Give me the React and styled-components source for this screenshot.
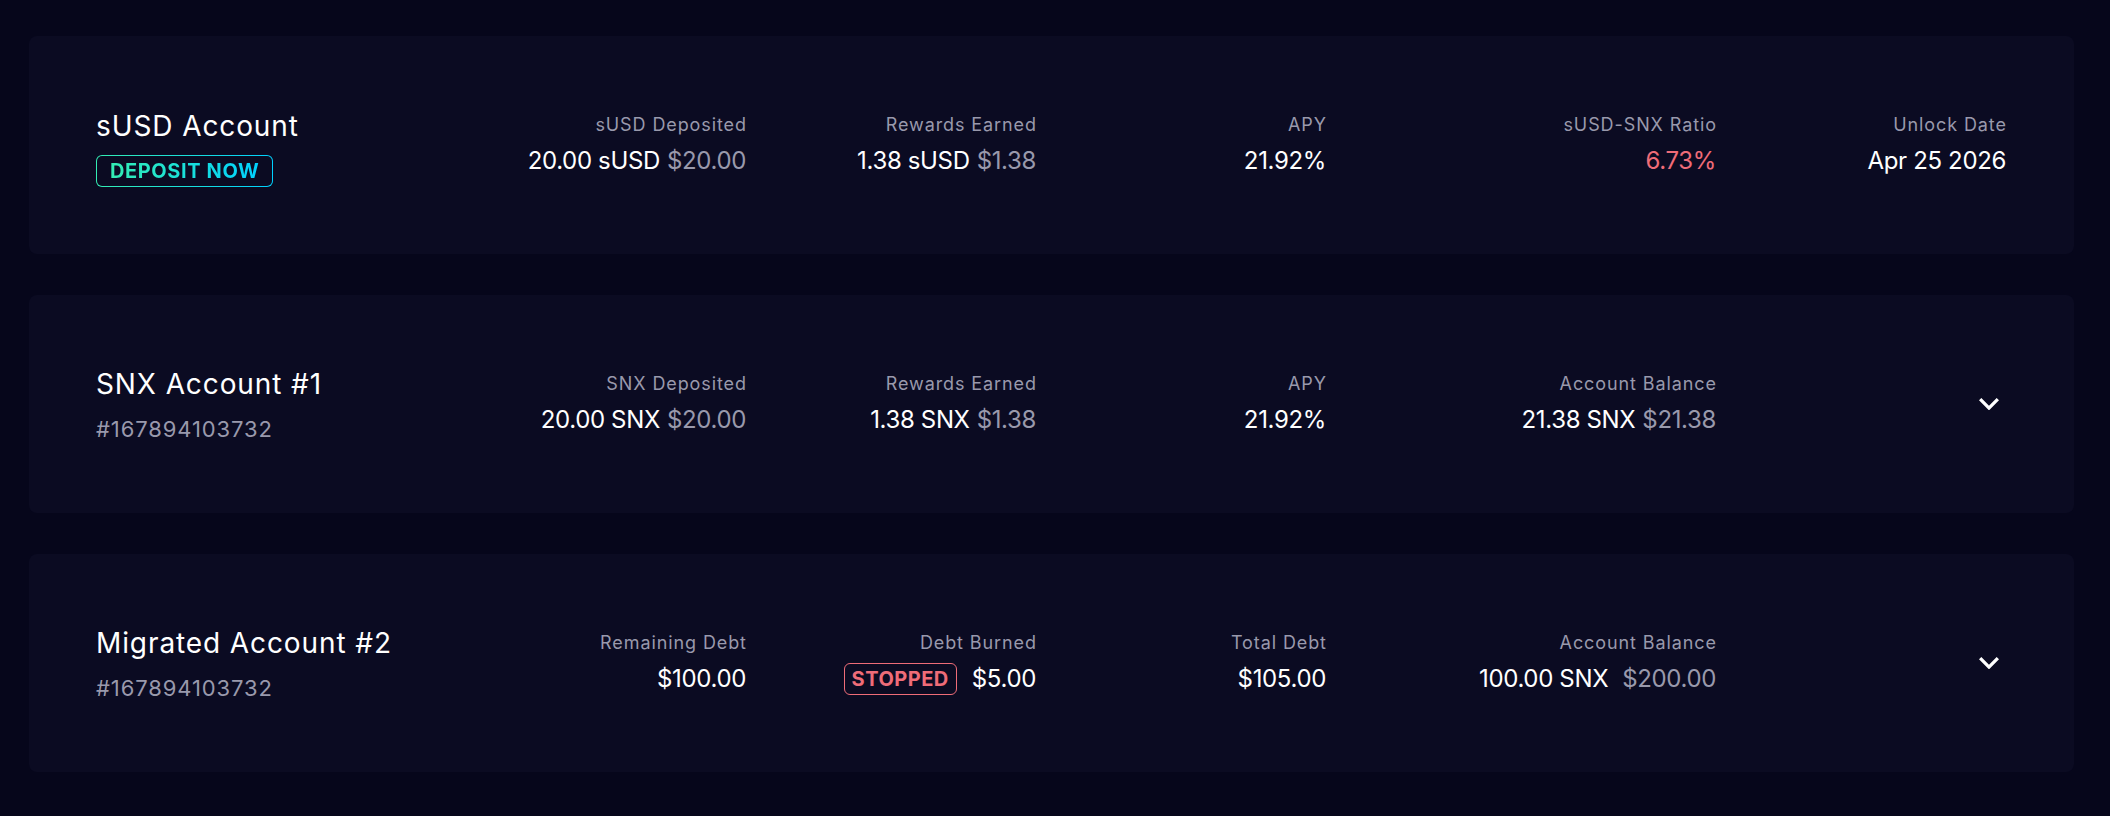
import styled, { createGlobalStyle } from "styled-components";

const GlobalStyle = createGlobalStyle`
  html, body {
    margin: 0;
    background: #06061b;
    font-family: Inter, "Noto Sans", sans-serif;
    color: #ffffff;
  }
`;

const accounts = [
  {
    title: "sUSD Account",
    deposit: true,
    stats: [
      { label: "sUSD Deposited", value: "20.00 sUSD", usd: "$20.00" },
      { label: "Rewards Earned", value: "1.38 sUSD", usd: "$1.38" },
      { label: "APY", value: "21.92%" },
      { label: "sUSD-SNX Ratio", value: "6.73%", red: true },
      { label: "Unlock Date", value: "Apr 25 2026" },
    ],
  },
  {
    title: "SNX Account #1",
    id: "#167894103732",
    stats: [
      { label: "SNX Deposited", value: "20.00 SNX", usd: "$20.00" },
      { label: "Rewards Earned", value: "1.38 SNX", usd: "$1.38" },
      { label: "APY", value: "21.92%" },
      { label: "Account Balance", value: "21.38 SNX", usd: "$21.38" },
    ],
  },
  {
    title: "Migrated Account #2",
    id: "#167894103732",
    stats: [
      { label: "Remaining Debt", value: "$100.00" },
      { label: "Debt Burned", value: "$5.00", stopped: true },
      { label: "Total Debt", value: "$105.00" },
      { label: "Account Balance", value: "100.00 SNX", usd: "$200.00", wide: true },
    ],
  },
];

function Chevron() {
  return (
    <svg width="20" height="12.4" viewBox="6 8.59 12 7.41" fill="#ffffff">
      <path d="M16.59 8.59L12 13.17 7.41 8.59 6 10l6 6 6-6z" />
    </svg>
  );
}

export default function App() {
  return (
    <>
      <GlobalStyle />
      <Page>
        {accounts.map((acc) => (
          <Card key={acc.title}>
            <Head $deposit={acc.deposit}>
              <Title>{acc.title}</Title>
              {acc.deposit ? (
                <DepositBadge>
                  <span>DEPOSIT NOW</span>
                </DepositBadge>
              ) : (
                <AccountId>{acc.id}</AccountId>
              )}
            </Head>
            {acc.stats.map((s) => (
              <Stat key={s.label}>
                <Label>{s.label}</Label>
                <Value $red={s.red}>
                  {s.stopped && <StoppedBadge>STOPPED</StoppedBadge>}
                  {s.value}
                  {s.usd && <Usd $wide={s.wide}>{s.usd}</Usd>}
                </Value>
              </Stat>
            ))}
            {acc.stats.length === 4 && (
              <Toggle>
                <Chevron />
              </Toggle>
            )}
          </Card>
        ))}
      </Page>
    </>
  );
}

const Page = styled.main`
  display: flex;
  flex-direction: column;
  gap: 41px;
  padding: 36px 36px 44px 29px;
`;

const Card = styled.section`
  height: 218px;
  box-sizing: border-box;
  background: #0b0b22;
  border-radius: 8px;
  padding: 0 68px 0 67px;
  display: grid;
  grid-template-columns: 1fr 250px 250px 250px 350px 250px;
  column-gap: 40px;
  align-items: center;
`;

const Head = styled.div`
  display: flex;
  flex-direction: column;
  align-items: flex-start;
  gap: ${(p) => (p.$deposit ? "9px" : "10px")};
  padding-top: ${(p) => (p.$deposit ? "3px" : "0")};
`;

const Title = styled.h2`
  margin: 0;
  font-size: 28px;
  line-height: 40px;
  font-weight: 400;
  letter-spacing: 0.9px;
  color: #ffffff;
`;

const AccountId = styled.div`
  font-size: 22px;
  line-height: 30px;
  letter-spacing: 0.9px;
  color: #9999ac;
`;

const DepositBadge = styled.div`
  height: 32px;
  box-sizing: border-box;
  padding: 0 13px;
  display: flex;
  align-items: center;
  border: 1px solid transparent;
  border-radius: 6px;
  background: linear-gradient(#0b0b22, #0b0b22) padding-box,
    linear-gradient(90deg, #34edb3, #00d1ff) border-box;
  span {
    font-size: 20px;
    font-weight: 700;
    letter-spacing: 0.6px;
    background: linear-gradient(90deg, #34edb3, #00d1ff);
    -webkit-background-clip: text;
    background-clip: text;
    color: transparent;
  }
`;

const Stat = styled.div`
  display: flex;
  flex-direction: column;
  align-items: flex-end;
  gap: 5px;
  text-align: right;
`;

const Label = styled.div`
  font-size: 18px;
  line-height: 27px;
  letter-spacing: 0.9px;
  margin-right: -0.9px;
  color: #9999ac;
`;

const Value = styled.div`
  display: flex;
  align-items: center;
  font-size: 24px;
  line-height: 36px;
  letter-spacing: -0.35px;
  white-space: nowrap;
  color: ${(p) => (p.$red ? "#ef6c78" : "#ffffff")};
`;

const Usd = styled.span`
  margin-left: ${(p) => (p.$wide ? "14px" : "7px")};
  color: #9999ac;
`;

const StoppedBadge = styled.span`
  height: 32px;
  box-sizing: border-box;
  display: inline-flex;
  align-items: center;
  padding: 0 7px;
  margin-right: 15px;
  border: 1px solid #ef6c78;
  border-radius: 6px;
  font-size: 20px;
  font-weight: 700;
  letter-spacing: 0.5px;
  color: #ef6c78;
`;

const Toggle = styled.div`
  justify-self: end;
  margin-right: 7px;
  display: flex;
  align-items: center;
`;
